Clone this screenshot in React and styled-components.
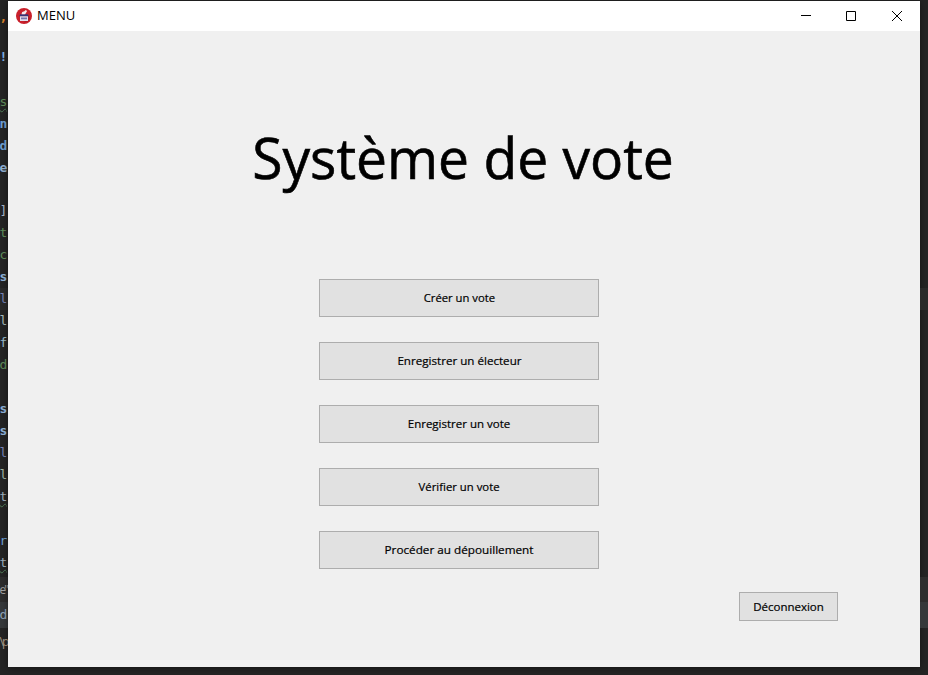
import React from "react";
import styled, { createGlobalStyle } from "styled-components";

const GlobalStyle = createGlobalStyle`
  * { box-sizing: border-box; }
  html, body { margin: 0; overflow: hidden; background: #242424; }
`;

const Desktop = styled.div`
  display: grid;
  grid-template-columns: 8px 912px 8px;
  width: 928px;
  height: 675px;
  overflow: hidden;
  background: #242424;
`;

const Gutter = styled.div`
  height: 675px;
  overflow: hidden;
`;

const CodeRow = styled.div`
  height: ${(p) => p.$h}px;
  line-height: ${(p) => p.$h}px;
  text-indent: -0.5px;
  background: ${(p) => p.$bg || "transparent"};
  color: ${(p) => p.$color || "#9aa8b5"};
  font-family: ${(p) => (p.$narrow ? '"Open Sans", sans-serif' : '"DejaVu Sans Mono", "Liberation Mono", monospace')};
  font-size: ${(p) => (p.$narrow ? 12 : 13)}px;
  font-weight: ${(p) => (p.$bold ? 700 : 400)};
  letter-spacing: ${(p) => (p.$narrow ? -2 : -0.5)}px;
  white-space: pre;
  overflow: hidden;
  text-decoration: ${(p) => (p.$wavy ? "underline wavy #4e7a55 1px" : "none")};
  text-underline-offset: 2px;
`;

const Window = styled.main`
  display: flex;
  flex-direction: column;
  margin-top: 1px;
  height: 666px;
  background: #f0f0f0;
  box-shadow: 0 1px 6px rgba(0, 0, 0, 0.45);
  color: #000;
`;

const TitleBar = styled.header`
  display: flex;
  align-items: center;
  height: 30px;
  padding-left: 8px;
  background: #fff;
`;

const WindowName = styled.div`
  flex: 1;
  height: 30px;
  padding-left: 5px;
  font: 13px/28px "Open Sans", "Noto Sans", sans-serif;
`;

const Label = styled.span`
  display: inline-block;
  white-space: nowrap;
  transform: scaleX(${(p) => p.$stretch || 1});
  transform-origin: ${(p) => p.$origin || "center"};
`;

const Control = styled.div`
  display: flex;
  align-items: center;
  justify-content: center;
  width: 46px;
  height: 30px;
`;

const Content = styled.section`
  display: flex;
  flex-direction: column;
  align-items: center;
  padding-top: 84px;
`;

const Heading = styled.h1`
  margin: 0 1px 0 0;
  height: 84px;
  font: 400 56px/84px "Open Sans", "Noto Sans", sans-serif;
  -webkit-text-stroke: 0.6px #000;
`;

const Actions = styled.nav`
  display: flex;
  flex-direction: column;
  gap: 25px;
  margin: 80px 10px 0 0;
`;

const Button = styled.button`
  display: flex;
  align-items: center;
  justify-content: center;
  width: ${(p) => (p.$small ? 99 : 280)}px;
  height: ${(p) => (p.$small ? 29 : 38)}px;
  padding: 0;
  border: 1px solid #adadad;
  border-radius: 0;
  background: #e1e1e1;
  color: #000;
  font: 11.5px/16px "Open Sans", "Noto Sans", sans-serif;
  -webkit-text-stroke: 0.2px #000;
`;

const Footer = styled.footer`
  display: flex;
  align-self: stretch;
  justify-content: flex-end;
  padding: 23px 82px 0 0;
`;

const BLUE = "#6f9fd0";
const GREEN = "#5f8c59";
const GREY = "#9dabb8";

const codeRows = [
  { h: 6 }, { h: 22, t: ",", c: "#d9822b", b: true }, { h: 18 },
  { h: 22, t: "!", c: "#7db0e6", b: true }, { h: 23 },
  { h: 22, t: "s", c: GREEN, wavy: true },
  { h: 22, t: "n", c: BLUE, b: true }, { h: 22, t: "d", c: BLUE, b: true },
  { h: 22, t: "e", c: "#91b0d0", b: true }, { h: 21 },
  { h: 22, t: "]", c: "#a6b4c6" }, { h: 22, t: "t", c: GREEN },
  { h: 22, t: "c", c: GREEN }, { h: 22, t: "s", c: "#8fb1d6", b: true },
  { h: 22, t: "l", c: "#7782b4", bg: "#2a2a2a" }, { h: 22, t: "l", c: "#a5b8b9" },
  { h: 22, t: "f", c: "#9abac8" }, { h: 22, t: "d", c: GREEN }, { h: 22 },
  { h: 22, t: "s", c: "#8fb1d6", b: true }, { h: 22, t: "s", c: "#8fb1d6", b: true },
  { h: 22, t: "l", c: "#7782b4" }, { h: 22, t: "l", c: "#9fb3a5" },
  { h: 22, t: "t", c: GREY, wavy: true }, { h: 22 },
  { h: 22, t: "r", c: BLUE }, { h: 22, t: "t", c: GREY, wavy: true }, { h: 3 },
  { h: 25, t: 'e"', c: "#a3a3a3", bg: "#2d2d2d", n: true },
  { h: 26, t: "d", c: "#92a5b8", bg: "#35383a" },
  { h: 27, t: "\\p", c: "#a99a88", n: true },
];

const actions = [
  ["Créer un vote", 0.98],
  ["Enregistrer un électeur", 1.01],
  ["Enregistrer un vote", 1],
  ["Vérifier un vote", 0.985],
  ["Procéder au dépouillement", 1.02],
];

const AppIcon = () => (
  <svg width="16" height="16" viewBox="0 0 16 16">
    <circle cx="8" cy="8" r="8" fill="#c9202b" />
    <path d="M12 8l2.5 2-2.5 3.5-4 1z" fill="#a91d27" />
    <path d="M4.300 6.300h7.400l.8 1.200v1H3.500v-1z" fill="#343579" />
    <path d="M4 8.300h8v4.700H4z" fill="#e2e1ef" />
    <path d="M5 9.500h6v1.800H5z" fill="#7676ac" />
    <path d="M5.500 6.300 6.200 4l2.200-.8 1.300-1.100 1.400 1-1 1.600-1 1.600z" fill="#f5e9ec" />
  </svg>
);

export default function App() {
  return (
    <>
      <GlobalStyle />
      <Desktop>
        <Gutter>
          {codeRows.map((r, i) => (
            <CodeRow key={i} $h={r.h} $color={r.c} $bg={r.bg} $bold={r.b} $wavy={r.wavy} $narrow={r.n}>
              {r.t}
            </CodeRow>
          ))}
        </Gutter>
        <Window>
          <TitleBar>
            <AppIcon />
            <WindowName><Label $origin="left">MENU</Label></WindowName>
            <Control>
              <svg width="12" height="10"><path d="M2 4.500h10" stroke="#000" /></svg>
            </Control>
            <Control>
              <svg width="10" height="10"><path d="M.5.5h9v9h-9z" fill="none" stroke="#000" /></svg>
            </Control>
            <Control>
              <svg width="10" height="10"><path d="M0 0 10 10M10 0 0 10" stroke="#000" /></svg>
            </Control>
          </TitleBar>
          <Content>
            <Heading><Label $stretch={0.985}>Système de vote</Label></Heading>
            <Actions>
              {actions.map(([text, stretch]) => (
                <Button key={text}><Label $stretch={stretch}>{text}</Label></Button>
              ))}
            </Actions>
            <Footer>
              <Button $small><Label>Déconnexion</Label></Button>
            </Footer>
          </Content>
        </Window>
        <Gutter>
          <CodeRow $h={288} />
          <CodeRow $h={22} $bg="#2a2a2a" />
          <CodeRow $h={267} />
          <CodeRow $h={25} $bg="#2d2d2d" />
          <CodeRow $h={26} $bg="#35383a" />
        </Gutter>
      </Desktop>
    </>
  );
}
